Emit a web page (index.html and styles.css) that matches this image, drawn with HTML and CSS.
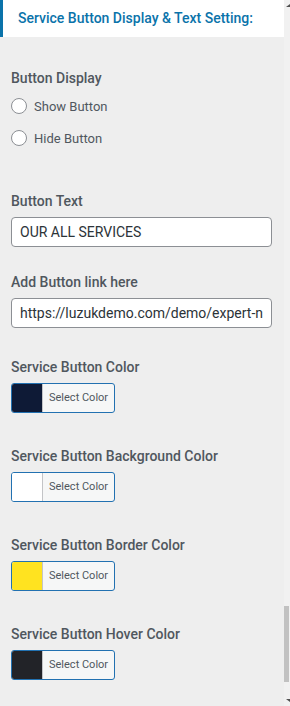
FILE: index.html
```html
<!DOCTYPE html>
<html lang="en">
<head>
  <meta charset="UTF-8" />
  <meta name="viewport" content="width=device-width, initial-scale=1.0" />
  <title>Service Button Settings</title>
  <link rel="stylesheet" href="styles.css">
</head>
<body>
  <div class="panel">
    <div class="section-title">Service Button Display &amp; Text Setting:</div>

    <div class="controls">
      <div class="field field-radio">
        <span class="label">Button Display</span>
        <label class="radio"><span class="radio-dot"></span>Show Button</label>
        <label class="radio"><span class="radio-dot"></span>Hide Button</label>
      </div>

      <div class="field">
        <span class="label">Button Text</span>
        <div class="text-input">OUR ALL SERVICES</div>
      </div>

      <div class="field field-link">
        <span class="label">Add Button link here</span>
        <div class="text-input">https://luzukdemo.com/demo/expert-n</div>
      </div>

      <div class="field field-color">
        <span class="label">Service Button Color</span>
        <button class="color-btn"><span class="swatch navy"></span><span class="color-text">Select Color</span></button>
      </div>

      <div class="field field-color">
        <span class="label">Service Button Background Color</span>
        <button class="color-btn"><span class="swatch white"></span><span class="color-text">Select Color</span></button>
      </div>

      <div class="field field-color">
        <span class="label">Service Button Border Color</span>
        <button class="color-btn"><span class="swatch yellow"></span><span class="color-text">Select Color</span></button>
      </div>

      <div class="field field-color">
        <span class="label">Service Button Hover Color</span>
        <button class="color-btn"><span class="swatch dark"></span><span class="color-text">Select Color</span></button>
      </div>
    </div>
  </div>

  <div class="scrollbar">
    <span class="arrow arrow-up"></span>
    <span class="thumb"></span>
    <span class="arrow arrow-down"></span>
  </div>
</body>
</html>
```
FILE: styles.css
```css
* {
  box-sizing: border-box;
}
body {
  margin: 0;
  height: 706px;
  overflow: hidden;
  display: flex;
  font-family: Roboto, 'Liberation Sans', sans-serif;
  background: #eeeeee;
  color: #50575e;
}
.panel {
  flex: 1;
  background: #eeeeee;
}
.section-title {
  height: 37px;
  background: #fff;
  border-left: 3px solid #0a73aa;
  padding-left: 15px;
  line-height: 37px;
  font-size: 14px;
  font-weight: 500;
  color: #0a73aa;
}
.controls {
  padding: 33px 12px 0 11px;
}
.field {
  margin-bottom: 27px;
}
.field-radio {
  margin-bottom: 39px;
}
.field-link {
  margin-bottom: 31px;
}
.field-color {
  margin-bottom: 35px;
}
.label {
  display: block;
  font-size: 14px;
  font-weight: 500;
  line-height: 17px;
  margin-bottom: 7px;
  color: #50575e;
}
.field-radio .label {
  margin-bottom: 3px;
}
.radio {
  display: flex;
  align-items: center;
  height: 32px;
  font-size: 13px;
  color: #50575e;
}
.radio-dot {
  width: 16px;
  height: 16px;
  border: 1px solid #8c8f94;
  border-radius: 50%;
  background: #fff;
  margin-right: 7px;
}
.text-input {
  height: 30px;
  border: 1px solid #8c8f94;
  border-radius: 4px;
  background: #fff;
  padding: 0 8px;
  line-height: 28px;
  font-size: 14px;
  color: #2c3338;
  white-space: nowrap;
  overflow: hidden;
}
.color-btn {
  display: flex;
  width: 104px;
  height: 30px;
  padding: 0;
  border: 1px solid #2271b1;
  border-radius: 3px;
  overflow: hidden;
  background: #f6f7f7;
  font-family: inherit;
}
.swatch {
  width: 30px;
  height: 100%;
}
.swatch.navy { background: #0e1a36; }
.swatch.white { background: #ffffff; }
.swatch.yellow { background: #ffe320; }
.swatch.dark { background: #222328; }
.color-text {
  flex: 1;
  border-left: 1px solid #c3c4c7;
  padding-left: 6px;
  line-height: 28px;
  font-size: 11px;
  color: #50575e;
  text-align: left;
}
.scrollbar {
  width: 7px;
  background: #f1f1f1;
  display: flex;
  flex-direction: column;
  align-items: flex-end;
}
.arrow {
  width: 0;
  height: 0;
  border-left: 4px solid transparent;
}
.arrow-up {
  margin-top: 4px;
  border-bottom: 3px solid #505050;
}
.thumb {
  width: 5px;
  height: 76px;
  background: #c1c1c1;
  margin-top: 599px;
  margin-right: 1px;
}
.arrow-down {
  margin-top: auto;
  margin-bottom: 4px;
  border-top: 3px solid #505050;
}
```
